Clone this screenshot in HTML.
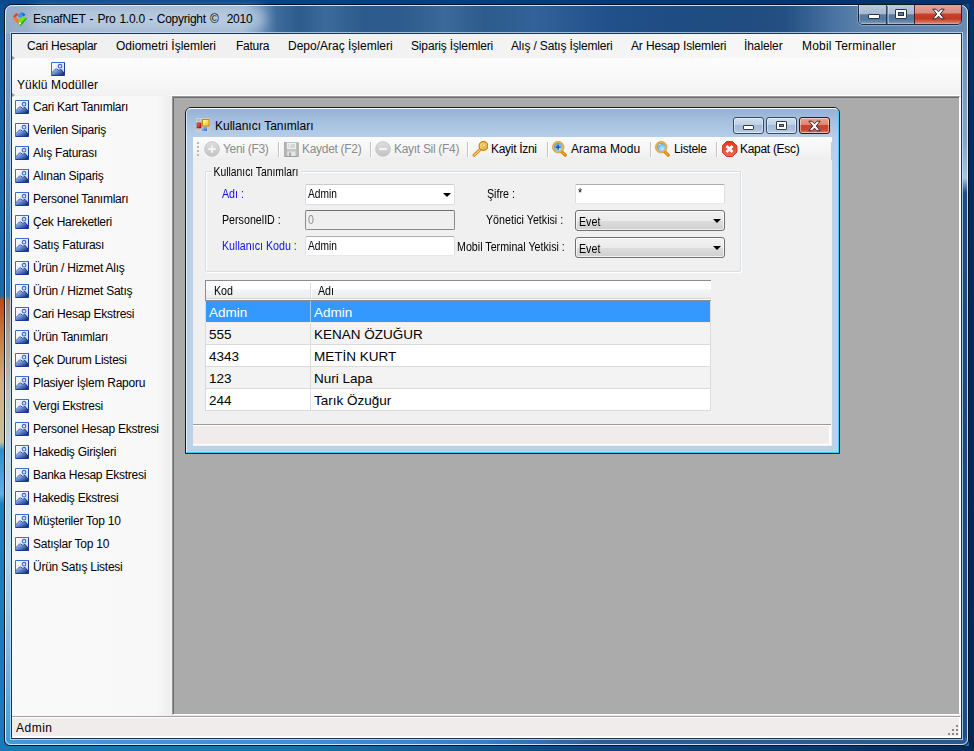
<!DOCTYPE html>
<html><head><meta charset="utf-8">
<style>
*{margin:0;padding:0;box-sizing:border-box}
html,body{width:974px;height:751px;overflow:hidden}
body{position:relative;font-family:"Liberation Sans",sans-serif;font-size:12px;color:#000;
background:linear-gradient(180deg,rgba(4,40,90,0) 0px,rgba(4,40,90,0) 740px,rgba(4,40,90,.25) 751px),linear-gradient(180deg,#0b4a8e 0px,#1268a8 400px,#1a78b8 751px)}
.a{position:absolute}
.t{position:absolute;white-space:pre;line-height:1}
/* main frame */
#frame{left:4px;top:4px;width:965px;height:742px;border:1px solid #0a1420;border-radius:8px 8px 6px 6px;overflow:hidden;
background:linear-gradient(90deg,#94acc8 0px,#9cb2cd 30px,#9fb5cf 238px,#6a90ba 256px,#3d6b9b 272px,#2d5b8d 295px,#3b6a9b 320px,#2c5a8c 360px,#2e5c8e 400px,#3a699a 440px,#2c5b8c 480px,#33629a 530px,#22508a 600px,#1e4b80 700px,#234f83 780px,#4a74a2 830px,#5a80aa 852px,#6a8cb4 965px)}
#fl{left:5px;top:33px;width:7px;height:712px;border-radius:0 0 0 6px;background:linear-gradient(180deg,#86a2c4 0px,#6e94c0 100px,#3580c0 220px,#2f7fbe 262px,#a08070 268px,#b09a88 300px,#bcc0b8 360px,#b8d4e4 420px,#b0d4ec 520px,#7ab8e0 620px,#3f9bd6 712px)}
#fr{left:961px;top:33px;width:7px;height:712px;border-radius:0 0 6px 0;background:linear-gradient(180deg,#7090b8 0px,#86a6c8 110px,#aac4e0 145px,#1f4c82 160px,#1c4a80 400px,#1f4e86 712px)}
#fb{left:5px;top:738px;width:963px;height:7px;border-radius:0 0 6px 6px;background:linear-gradient(90deg,#3f9bd6 0px,#3a92d0 300px,#3480c0 480px,#2c5c98 600px,#2a5890 963px)}
#glow{left:30px;top:8px;width:236px;height:22px;border-radius:11px;background:rgba(200,216,234,.6);filter:blur(6px)}
#frameInner{left:5px;top:5px;width:963px;height:740px;border:1px solid rgba(235,245,255,.85);border-radius:7px 7px 6px 6px}
#client{left:10px;top:32px;width:953px;height:708px;border:1px solid rgba(200,225,245,.75);}
#clientIn{left:11px;top:33px;width:951px;height:706px;border:1px solid #1d3550;background:#f0f0f0}
#menubar{left:12px;top:34px;width:949px;height:24px;background:linear-gradient(90deg,#efefef 0px,#f1f1f1 300px,#f4f4f4 600px,#fafafa 949px)}
#toolstrip{left:12px;top:58px;width:949px;height:37px;background:linear-gradient(180deg,#fcfcfc 0%,#f9f9f9 50%,#f2f2f2 100%)}
#leftpanel{left:12px;top:96px;width:160px;height:620px;background:linear-gradient(90deg,#f9f9f9 0%,#f8f8f8 90%,#ededed 100%)}
#mdi{left:172px;top:96px;width:789px;height:619px;background:#ababab;border-left:1px solid #999;border-top:1px solid #999;border-bottom:1px solid #fff;border-right:2px solid #fff;box-shadow:inset 1px 1px 0 #6a6a6a}
#statusline{left:12px;top:716px;width:948px;height:1px;background:#a0a0a0}
#status{left:12px;top:717px;width:949px;height:21px;background:#f0ecec;border-top:1px solid #fff;border-bottom:2px solid #fff;border-right:2px solid #fff}
.pic{position:absolute;width:14px;height:14px}
.li{left:33px;font-size:12px;letter-spacing:-0.25px}
.cbtn{position:absolute;top:117px;width:31px;height:17px;border:1px solid #3a4a60;border-radius:3px;
background:linear-gradient(180deg,#d2e0f0 0%,#bcd0e6 45%,#a3bcd8 50%,#a9c1dc 80%,#c6d8ec 100%);box-shadow:inset 0 0 0 1px rgba(255,255,255,.45)}
.cbtn.x{border-color:#4a1010;background:linear-gradient(180deg,#eba394 0%,#de8470 45%,#c8452c 50%,#c24a32 80%,#dc8a70 100%)}
.tb{position:absolute;top:143px;font-size:12px;white-space:pre;line-height:1;letter-spacing:-0.3px}
.tb.dis{color:#8b8b8b}
.sep{position:absolute;top:142px;width:1px;height:15px;background:#c2c2c2;box-shadow:1px 0 0 #fff}
.ms{font-size:11px;letter-spacing:-0.35px}
.lbl{position:absolute;white-space:pre;line-height:1;font-size:12px;transform:scaleX(0.89);transform-origin:0 0}
.txt{position:absolute;width:150px;height:20px;background:#fff;border:1px solid #e3e9ef;border-top-color:#abadb3;border-left-color:#dbdfe6;border-right-color:#dbdfe6;border-radius:2px}
.cmbg{position:absolute;width:150px;height:21px;border:1px solid #707070;border-radius:3px;
background:linear-gradient(180deg,#f2f2f2 0%,#ebebeb 50%,#dddddd 52%,#cfcfcf 100%);box-shadow:inset 0 0 0 1px rgba(255,255,255,.7)}
.arr{position:absolute;width:0;height:0;border-left:4px solid transparent;border-right:4px solid transparent;border-top:4px solid #000}
.row{position:absolute;left:206px;width:504px;height:22px;border-bottom:1px solid #dadada}
.cell{position:absolute;font-size:13.5px;white-space:pre;line-height:1}
</style></head><body>
<div class="a" style="left:0;top:0;width:974px;height:4px;background:linear-gradient(90deg,#0b4a8e,#083c7a 500px,#06306a)"></div>
<div class="a" style="left:0;top:4px;width:4px;height:747px;background:linear-gradient(180deg,#0c4f92 0px,#1a6aaa 200px,#1a6aaa 292px,#c04818 296px,#c87838 330px,#d0b080 380px,#c8c0a0 438px,#2a90d0 446px,#60b0e0 490px,#1a80c0 500px,#1a78b8 747px)"></div>
<div class="a" style="left:969px;top:0;width:5px;height:751px;background:linear-gradient(180deg,#06306a,#062a58 300px,#052650 751px)"></div>
<div class="a" style="left:0;top:746px;width:974px;height:5px;background:linear-gradient(90deg,#1a78b8 0px,#1a70b0 300px,#0a4a88 550px,#073a70 800px,#052a58 974px)"></div>
<div class="a" id="frame"></div>
<div class="a" id="fl"></div><div class="a" id="fr"></div><div class="a" id="fb"></div><div class="a" id="glow"></div>
<div class="a" id="frameInner"></div>
<div class="a" id="client"></div>
<div class="a" id="clientIn"></div>
<div class="a" id="menubar"></div>
<div class="a" id="toolstrip"></div>
<div class="a" id="leftpanel"></div>
<div class="a" id="mdi"></div>
<div class="a" style="left:169px;top:95px;width:792px;height:1px;background:#fdfdfd"></div>
<div class="a" id="statusline"></div>
<div class="a" id="status"></div>

<svg width="0" height="0" style="position:absolute">
<defs>
<linearGradient id="picbg" x1="0" y1="0" x2="1" y2="1"><stop offset="0" stop-color="#ffffff"/><stop offset="0.6" stop-color="#dfe8fa"/><stop offset="1" stop-color="#9fb8ea"/></linearGradient>
<linearGradient id="picmt" x1="0" y1="0" x2="1" y2="1"><stop offset="0" stop-color="#e8eefc"/><stop offset="0.45" stop-color="#6c8fd8"/><stop offset="1" stop-color="#0c2470"/></linearGradient>
<symbol id="pic" viewBox="0 0 14 14">
<rect x="0" y="0" width="14" height="14" fill="url(#picbg)"/>
<path d="M1 10 L5 6.2 L7.8 8 L10 7 L13 10.5 L13 13 L1 13Z" fill="url(#picmt)"/>
<path d="M1 10.5 L5 6.5 L8 8.5" stroke="#2a4cb0" stroke-width="1" fill="none" stroke-dasharray="1.2 0.5"/>
<path d="M8.5 8 L10 7.5 L13.5 11.8" stroke="#101830" stroke-width="1" fill="none" stroke-dasharray="1 0.4"/>
<path d="M0.5 13.5 V0.5 H13.5" stroke="#3d6cd4" stroke-width="1" fill="none"/>
<path d="M13.5 0.5 V13.5 H0.5" stroke="#1a3a98" stroke-width="1" fill="none"/>
<circle cx="9" cy="4.2" r="1.8" fill="#dce8ff" stroke="#3466d0" stroke-width="1.1"/>
</symbol>
</defs></svg>
<div class="a" id="lp">
<svg class="pic" style="left:15px;top:100px"><use href="#pic"/></svg><div class="t li" style="top:101px">Cari Kart Tanımları</div>
<svg class="pic" style="left:15px;top:123px"><use href="#pic"/></svg><div class="t li" style="top:124px">Verilen Sipariş</div>
<svg class="pic" style="left:15px;top:146px"><use href="#pic"/></svg><div class="t li" style="top:147px">Alış Faturası</div>
<svg class="pic" style="left:15px;top:169px"><use href="#pic"/></svg><div class="t li" style="top:170px">Alınan Sipariş</div>
<svg class="pic" style="left:15px;top:192px"><use href="#pic"/></svg><div class="t li" style="top:193px">Personel Tanımları</div>
<svg class="pic" style="left:15px;top:215px"><use href="#pic"/></svg><div class="t li" style="top:216px">Çek Hareketleri</div>
<svg class="pic" style="left:15px;top:238px"><use href="#pic"/></svg><div class="t li" style="top:239px">Satış Faturası</div>
<svg class="pic" style="left:15px;top:261px"><use href="#pic"/></svg><div class="t li" style="top:262px">Ürün / Hizmet Alış</div>
<svg class="pic" style="left:15px;top:284px"><use href="#pic"/></svg><div class="t li" style="top:285px">Ürün / Hizmet Satış</div>
<svg class="pic" style="left:15px;top:307px"><use href="#pic"/></svg><div class="t li" style="top:308px">Cari Hesap Ekstresi</div>
<svg class="pic" style="left:15px;top:330px"><use href="#pic"/></svg><div class="t li" style="top:331px">Ürün Tanımları</div>
<svg class="pic" style="left:15px;top:353px"><use href="#pic"/></svg><div class="t li" style="top:354px">Çek Durum Listesi</div>
<svg class="pic" style="left:15px;top:376px"><use href="#pic"/></svg><div class="t li" style="top:377px">Plasiyer İşlem Raporu</div>
<svg class="pic" style="left:15px;top:399px"><use href="#pic"/></svg><div class="t li" style="top:400px">Vergi Ekstresi</div>
<svg class="pic" style="left:15px;top:422px"><use href="#pic"/></svg><div class="t li" style="top:423px">Personel Hesap Ekstresi</div>
<svg class="pic" style="left:15px;top:445px"><use href="#pic"/></svg><div class="t li" style="top:446px">Hakediş Girişleri</div>
<svg class="pic" style="left:15px;top:468px"><use href="#pic"/></svg><div class="t li" style="top:469px">Banka Hesap Ekstresi</div>
<svg class="pic" style="left:15px;top:491px"><use href="#pic"/></svg><div class="t li" style="top:492px">Hakediş Ekstresi</div>
<svg class="pic" style="left:15px;top:514px"><use href="#pic"/></svg><div class="t li" style="top:515px">Müşteriler Top 10</div>
<svg class="pic" style="left:15px;top:537px"><use href="#pic"/></svg><div class="t li" style="top:538px">Satışlar Top 10</div>
<svg class="pic" style="left:15px;top:560px"><use href="#pic"/></svg><div class="t li" style="top:561px">Ürün Satış Listesi</div>
</div>

<!-- child window -->
<div class="a" id="cw" style="left:185px;top:107px;width:655px;height:347px;border:1px solid #1a1a1a;border-radius:6px 6px 0 0;background:linear-gradient(180deg,#93afd2 0px,#a5bfdf 12px,#b5cde8 29px,#bad1ea 60px,#bad1ea 100%)"></div>
<div class="a" style="left:186px;top:108px;width:653px;height:345px;border-top:1px solid #fff;border-left:1px solid rgba(255,255,255,.6);border-right:1px solid #38d0f0;border-bottom:1px solid #38d0f0;border-radius:5px 5px 0 0"></div>
<div class="a" id="cclient" style="left:193px;top:137px;width:639px;height:309px;background:#f0f0f0"></div>
<div class="a" style="left:193px;top:137px;width:639px;height:23px;background:linear-gradient(180deg,#fbfbfb 0%,#f6f6f6 50%,#eeeeee 100%)"></div>
<div class="a" style="left:831px;top:142px;width:1px;height:18px;background:#c8c8c8"></div>
<div class="a" style="left:193px;top:424px;width:638px;height:1px;background:#9a9a9a"></div>
<div class="a" style="left:193px;top:425px;width:638px;height:20px;background:#f0ecec;border-top:1px solid #fff;border-bottom:1px solid #fff;border-right:2px solid #fff"></div>

<!-- child title -->
<svg class="a" style="left:196px;top:118px" width="14" height="14" viewBox="0 0 14 14">
<defs><linearGradient id="gy" x1="0" y1="0" x2="1" y2="1"><stop offset="0" stop-color="#fff6c0"/><stop offset="1" stop-color="#ffc400"/></linearGradient>
<linearGradient id="gb" x1="0" y1="0" x2="1" y2="1"><stop offset="0" stop-color="#a8ccff"/><stop offset="1" stop-color="#2a64d0"/></linearGradient>
<linearGradient id="grd" x1="0" y1="0" x2="1" y2="1"><stop offset="0" stop-color="#f08080"/><stop offset="1" stop-color="#a00000"/></linearGradient></defs>
<rect x="0.5" y="0.5" width="13" height="13" fill="none" stroke="#cfcdc8" stroke-width="1"/>
<path d="M4.5 0.5 V13.5 M0.5 3.5 H4.5 M0.5 10.5 H4.5 M11.5 9 V13.5 M2.5 10.5 V13.5" stroke="#cfcdc8" stroke-width="1"/>
<rect x="1" y="5" width="4" height="5" fill="url(#grd)" stroke="#a01010" stroke-width="0.6"/>
<rect x="6.5" y="1.5" width="6.5" height="6.5" fill="url(#gy)" stroke="#c09000" stroke-width="1"/>
<rect x="6" y="9" width="5" height="4" fill="url(#gb)"/>
</svg>
<div class="t" style="left:215px;top:120px;font-size:12px">Kullanıcı Tanımları</div>
<div class="cbtn" style="left:733px"></div>
<div class="cbtn" style="left:766px"></div>
<div class="cbtn x" style="left:799px"></div>
<div class="a" style="left:743px;top:125px;width:11px;height:5px;background:#fff;border:1px solid #333a48;border-radius:1px"></div>
<div class="a" style="left:776px;top:121px;width:11px;height:9px;background:#fff;border:1px solid #333a48;border-radius:1px"></div>
<div class="a" style="left:779px;top:124px;width:5px;height:3px;background:#7090b8;border:1px solid #333a48"></div>
<svg class="a" style="left:808px;top:120px" width="13" height="12" viewBox="0 0 13 12">
<path d="M0.8 1.2 H4 L6.5 3.8 L9 1.2 H12.2 L8.3 6 L12.2 10.8 H9 L6.5 8.2 L4 10.8 H0.8 L4.7 6Z" fill="#fafafa" stroke="#3a2a2a" stroke-width="1" stroke-linejoin="round"/>
</svg>

<!-- child toolbar -->
<div class="a" style="left:197px;top:142px;width:2px;height:2px;background:#b8b8b8;box-shadow:0 4px 0 #b8b8b8,0 8px 0 #b8b8b8,0 12px 0 #b8b8b8"></div>
<svg class="a" style="left:204px;top:141px" width="16" height="16" viewBox="0 0 16 16">
<defs><linearGradient id="gcirc" x1="0" y1="0" x2="0" y2="1"><stop offset="0" stop-color="#dedede"/><stop offset="1" stop-color="#c4c4c4"/></linearGradient></defs>
<circle cx="8" cy="8" r="7.3" fill="url(#gcirc)" stroke="#c2c2c2" stroke-width="0.9"/>
<path d="M8 4.2 V11.8 M4.2 8 H11.8" stroke="#f4f4f4" stroke-width="1.9"/>
</svg>
<div class="tb dis" style="left:223px">Yeni (F3)</div>
<div class="sep" style="left:278px"></div>
<svg class="a" style="left:284px;top:142px" width="15" height="15" viewBox="0 0 15 15">
<rect x="0" y="0" width="15" height="15" rx="0.5" fill="#c4c4c4"/>
<rect x="0" y="0" width="2.5" height="15" fill="#b0b0b0"/>
<rect x="12.5" y="1" width="2.5" height="14" fill="#b6b6b6"/>
<rect x="3" y="1" width="9" height="6" fill="#eeeeee"/>
<path d="M4 3 H5.5 M7 3 H11 M4 5 H4.8 M6 5 H11" stroke="#bcbcbc" stroke-width="1"/>
<rect x="3" y="8" width="9" height="1" fill="#c4c4c4"/>
<rect x="3.5" y="9.5" width="8" height="5.5" fill="#e4e4e4"/>
<rect x="5" y="10.5" width="2" height="4" fill="#a6a6a6"/>
<rect x="2" y="14" width="11" height="1" fill="#9c9c9c"/>
</svg>
<div class="tb dis" style="left:302px">Kaydet (F2)</div>
<div class="sep" style="left:370px"></div>
<svg class="a" style="left:375px;top:141px" width="16" height="16" viewBox="0 0 16 16">
<circle cx="8" cy="8" r="7.3" fill="url(#gcirc)" stroke="#c2c2c2" stroke-width="0.9"/>
<path d="M4.2 8 H11.8" stroke="#f4f4f4" stroke-width="2.2"/>
</svg>
<div class="tb dis" style="left:394px">Kayıt Sil (F4)</div>
<div class="sep" style="left:467px"></div>
<svg class="a" style="left:472px;top:141px" width="16" height="16" viewBox="0 0 16 16">
<defs><linearGradient id="ggold" x1="0" y1="0" x2="1" y2="1"><stop offset="0" stop-color="#ffe27a"/><stop offset="1" stop-color="#e8a420"/></linearGradient></defs>
<path d="M8.6 8.2 L2.2 14.2" stroke="#c8861a" stroke-width="3.2" stroke-linecap="round"/>
<path d="M8.6 8.2 L2.2 14.2" stroke="#f6c850" stroke-width="1.6" stroke-linecap="round" stroke-dasharray="1.2 0.8"/>
<circle cx="11.5" cy="5" r="4.4" fill="url(#ggold)" stroke="#c07a14" stroke-width="1.1"/>
<circle cx="12" cy="4.2" r="1.3" fill="#f4f4f4" stroke="#d09030" stroke-width="0.5"/>
</svg>
<div class="tb" style="left:491px">Kayit İzni</div>
<div class="sep" style="left:547px"></div>
<svg class="a" style="left:551px;top:141px" width="16" height="16" viewBox="0 0 16 16">
<defs><radialGradient id="glens551" cx="0.6" cy="0.65" r="0.7"><stop offset="0" stop-color="#c8f0ff"/><stop offset="1" stop-color="#3a8ee0"/></radialGradient></defs>
<path d="M10.5 10.5 L14.2 14.2" stroke="#d8850e" stroke-width="3.2" stroke-linecap="round"/>
<path d="M11 11 L14 14" stroke="#ffc040" stroke-width="1.3" stroke-dasharray="0.8 0.8"/>
<circle cx="7.2" cy="6.2" r="5" fill="url(#glens551)" stroke="#e8b048" stroke-width="1.7"/>
<circle cx="7.2" cy="6.2" r="5.9" fill="none" stroke="#c88a20" stroke-width="0.5"/>
<path d="M7.2 3.7 V8.7 M4.7 6.2 H9.7" stroke="#1a5a9a" stroke-width="1.5"/>
</svg>
<div class="tb" style="left:571px;letter-spacing:0.05px">Arama Modu</div>
<div class="sep" style="left:650px"></div>
<svg class="a" style="left:654px;top:141px" width="16" height="16" viewBox="0 0 16 16">
<defs><radialGradient id="glens654" cx="0.6" cy="0.65" r="0.7"><stop offset="0" stop-color="#c8f0ff"/><stop offset="1" stop-color="#3a8ee0"/></radialGradient></defs>
<path d="M10.5 10.5 L14.2 14.2" stroke="#d8850e" stroke-width="3.2" stroke-linecap="round"/>
<path d="M11 11 L14 14" stroke="#ffc040" stroke-width="1.3" stroke-dasharray="0.8 0.8"/>
<circle cx="7.2" cy="6.2" r="5" fill="url(#glens654)" stroke="#e8b048" stroke-width="1.7"/>
<circle cx="7.2" cy="6.2" r="5.9" fill="none" stroke="#c88a20" stroke-width="0.5"/>
<path d="M4.2 4.5 Q5 3.2 6.5 3.2" stroke="#fff" stroke-width="1" fill="none" opacity=".8"/>
</svg>
<div class="tb" style="left:674px">Listele</div>
<div class="sep" style="left:716px"></div>
<svg class="a" style="left:722px;top:141px" width="16" height="16" viewBox="0 0 16 16">
<defs><linearGradient id="gred" x1="0" y1="0" x2="0" y2="1"><stop offset="0" stop-color="#e03a20"/><stop offset="1" stop-color="#f06850"/></linearGradient></defs>
<path d="M4.5 0.5 H10.5 L15 5 V11 L10.5 15.5 H4.5 L0 11 V5Z" fill="url(#gred)" stroke="#c83018" stroke-width="0.9"/>
<path d="M4.5 5 L10.5 11 M10.5 5 L4.5 11" stroke="#fff" stroke-width="2.6"/>
</svg>
<div class="tb" style="left:740px">Kapat (Esc)</div>

<!-- group box -->
<div class="a" style="left:205px;top:171px;width:536px;height:101px;border:1px solid #d5dfe5;border-radius:2px;box-shadow:inset 1px 1px 0 #fff,1px 1px 0 #fff"></div>
<div class="lbl" style="left:211px;top:166px;padding:0 3px;background:#f0f0f0;transform:scaleX(0.86)">Kullanıcı Tanımları</div>
<div class="lbl" style="left:222px;top:188px;color:#1010e8">Adı :</div>
<div class="lbl" style="left:222px;top:214px">PersonelID :</div>
<div class="lbl" style="left:222px;top:240px;color:#1010e8">Kullanıcı Kodu :</div>
<div class="lbl" style="left:487px;top:188px">Şifre :</div>
<div class="lbl" style="left:486px;top:214px">Yönetici Yetkisi :</div>
<div class="lbl" style="left:457px;top:241px">Mobil Terminal Yetkisi :</div>

<div class="txt" style="left:305px;top:184px;height:21px;border-color:#dadde4;border-top-color:#c8cacf"></div>
<div class="lbl" style="left:308px;top:188px;transform:scaleX(0.85)">Admin</div>
<div class="arr" style="left:443px;top:193px"></div>
<div class="txt" style="left:305px;top:210px;background:#efefef;border-color:#8a8a8a;border-top-color:#707070"></div>
<div class="lbl" style="left:308px;top:214px;color:#8d8d8d">0</div>
<div class="txt" style="left:305px;top:236px"></div>
<div class="lbl" style="left:308px;top:240px;transform:scaleX(0.85)">Admin</div>

<div class="txt" style="left:575px;top:184px"></div>
<div class="lbl" style="left:578px;top:187px">*</div>
<div class="cmbg" style="left:575px;top:210px"></div>
<div class="lbl" style="left:579px;top:216px">Evet</div>
<div class="arr" style="left:713px;top:219px"></div>
<div class="cmbg" style="left:575px;top:237px"></div>
<div class="lbl" style="left:579px;top:243px">Evet</div>
<div class="arr" style="left:713px;top:246px"></div>

<!-- grid -->
<div class="a" style="left:205px;top:301px;width:1px;height:110px;background:#dadada"></div>
<div class="a" style="left:205px;top:280px;width:506px;height:21px;border:1px solid #8c8c8c;border-right:none;background:linear-gradient(180deg,#ffffff 0px,#ffffff 8px,#f2f3f5 9px,#eceef1 16px,#eceef1 17px)"></div>
<div class="a" style="left:206px;top:298px;width:505px;height:1px;background:#d6d6d6"></div>
<div class="a" style="left:206px;top:299px;width:505px;height:1px;background:#fff"></div>
<div class="a" style="left:310px;top:283px;width:1px;height:15px;background:#dcdcdc;box-shadow:1px 0 0 #fff"></div>
<div class="lbl" style="left:214px;top:285px">Kod</div>
<div class="lbl" style="left:318px;top:285px">Adı</div>

<div class="row" style="top:301px;background:#3399ff;border-bottom-color:#eeeeee"></div>
<div class="row" style="top:323px;background:#f3f3f3"></div>
<div class="row" style="top:345px;background:#fff"></div>
<div class="row" style="top:367px;background:#f3f3f3"></div>
<div class="row" style="top:389px;background:#fff"></div>
<div class="a" style="left:310px;top:323px;width:1px;height:88px;background:#dcdcdc"></div>
<div class="a" style="left:310px;top:301px;width:1px;height:21px;background:#9cc8f4"></div>
<div class="a" style="left:710px;top:301px;width:1px;height:110px;background:#dcdcdc"></div>

<div class="cell" style="left:209px;top:306px;color:#fff">Admin</div>
<div class="cell" style="left:314px;top:306px;color:#fff">Admin</div>
<div class="cell" style="left:209px;top:328px">555</div>
<div class="cell" style="left:314px;top:328px">KENAN ÖZUĞUR</div>
<div class="cell" style="left:209px;top:350px">4343</div>
<div class="cell" style="left:314px;top:350px">METİN KURT</div>
<div class="cell" style="left:209px;top:372px">123</div>
<div class="cell" style="left:314px;top:372px">Nuri Lapa</div>
<div class="cell" style="left:209px;top:394px">244</div>
<div class="cell" style="left:314px;top:394px">Tarık Özuğur</div>

<!-- main caption buttons -->
<div class="a" style="left:858px;top:5px;width:104px;height:20px;border:1px solid rgba(20,30,50,.9);border-top:none;border-radius:0 0 5px 5px;overflow:hidden;box-shadow:0 1px 0 rgba(255,255,255,.3),-1px 0 0 rgba(255,255,255,.2)">
 <div class="a" style="left:0;top:0;width:28px;height:19px;border-right:1px solid rgba(20,30,50,.75);background:linear-gradient(180deg,#bccbdd 0%,#a6b9d0 45%,#587aa2 52%,#5679a0 78%,#7f9fc2 100%);box-shadow:inset 1px 0 0 rgba(255,255,255,.35),inset 0 -1px 0 rgba(255,255,255,.3)"></div>
 <div class="a" style="left:29px;top:0;width:27px;height:19px;border-right:1px solid rgba(60,20,20,.85);background:linear-gradient(180deg,#bccbdd 0%,#a6b9d0 45%,#587aa2 52%,#5679a0 78%,#7f9fc2 100%);box-shadow:inset 1px 0 0 rgba(255,255,255,.35),inset 0 -1px 0 rgba(255,255,255,.3)"></div>
 <div class="a" style="left:56px;top:0;width:48px;height:19px;background:linear-gradient(180deg,#e2a298 0%,#d88f84 40%,#c9402a 50%,#c23a22 72%,#d67660 92%,#e9b0a0 100%)"></div>
</div>
<div class="a" style="left:868px;top:14px;width:12px;height:5px;background:#fff;border:1px solid #2a3444;border-radius:1px"></div>
<div class="a" style="left:895px;top:9px;width:12px;height:10px;background:#fff;border:1px solid #2a3444;border-radius:1px"></div>
<div class="a" style="left:898px;top:12px;width:6px;height:4px;background:#5a7aa0;border:1px solid #2a3444"></div>
<svg class="a" style="left:932px;top:8px" width="13" height="12" viewBox="0 0 13 12">
<path d="M0.8 1.2 H4 L6.5 3.8 L9 1.2 H12.2 L8.3 6 L12.2 10.8 H9 L6.5 8.2 L4 10.8 H0.8 L4.7 6Z" fill="#fafafa" stroke="#262c3a" stroke-width="1" stroke-linejoin="round"/>
</svg>

<!-- app icon -->
<svg class="a" style="left:12px;top:11px" width="16" height="16" viewBox="0 0 16 16">
<path d="M1 5.5 L4.5 2 L6 3.5 L3.5 6 L8 10.5 L6.5 13.5Z" fill="#ee5a1c"/>
<path d="M1 5.5 L4.5 2 L6 3.5 L3.5 6Z" fill="#d84a22"/>
<path d="M3.5 6 L8 10.5 L6.5 13.5 L1 8Z" fill="#ff7a2a"/>
<path d="M5 4.5 L9.5 1 L13.5 3.5 L10 7 L7.5 6.5Z" fill="#4a8ef0"/>
<path d="M10 1.5 L13.5 3.5 L11 6 Z" fill="#2060d8"/>
<path d="M7 8.5 L11 5 L15 7.5 L8.5 15 L6.5 13Z" fill="#70e020"/>
<path d="M15 7.5 L8.5 15 L7.5 14 L14 7Z" fill="#20a010"/>
<circle cx="8" cy="12.5" r="1" fill="#f0ffe0"/>
</svg>

<!-- Yuklu Moduller icon -->
<svg class="pic" style="left:51px;top:62px"><use href="#pic"/></svg>
<!-- grips -->
<div class="a" style="left:12px;top:56px;width:0;height:0;border-top:2px solid transparent;border-bottom:2px solid transparent;border-left:3px solid #9a9a9a"></div>
<div class="a" style="left:12px;top:93px;width:0;height:0;border-top:2px solid transparent;border-bottom:2px solid transparent;border-left:3px solid #9a9a9a"></div>
<!-- status grip -->
<div class="a" style="left:956px;top:725px;width:2px;height:2px;background:#8a8a8a;box-shadow:-4px 4px 0 #8a8a8a,0 4px 0 #8a8a8a,-8px 8px 0 #8a8a8a,-4px 8px 0 #8a8a8a,0 8px 0 #8a8a8a"></div>
<!-- title -->
<div class="t" style="left:33px;top:13px;font-size:12px;color:#000;letter-spacing:-0.25px;word-spacing:1px">EsnafNET - Pro 1.0.0 - Copyright ©  2010</div>

<!-- menu -->
<div class="t" style="left:27px;top:40px;letter-spacing:-0.25px">Cari Hesaplar</div>
<div class="t" style="left:116px;top:40px">Odiometri İşlemleri</div>
<div class="t" style="left:236px;top:40px;letter-spacing:-0.25px">Fatura</div>
<div class="t" style="left:288px;top:40px">Depo/Araç İşlemleri</div>
<div class="t" style="left:411px;top:40px;letter-spacing:-0.15px">Sipariş İşlemleri</div>
<div class="t" style="left:511px;top:40px;letter-spacing:-0.17px">Alış / Satış İşlemleri</div>
<div class="t" style="left:631px;top:40px;letter-spacing:-0.15px">Ar Hesap Islemleri</div>
<div class="t" style="left:744px;top:40px;letter-spacing:-0.1px">İhaleler</div>
<div class="t" style="left:802px;top:40px;letter-spacing:0.2px">Mobil Terminaller</div>

<div class="t" style="left:17px;top:79px;letter-spacing:0.12px">Yüklü Modüller</div>
<div class="t" style="left:16px;top:722px;letter-spacing:0.5px">Admin</div>

</body></html>
